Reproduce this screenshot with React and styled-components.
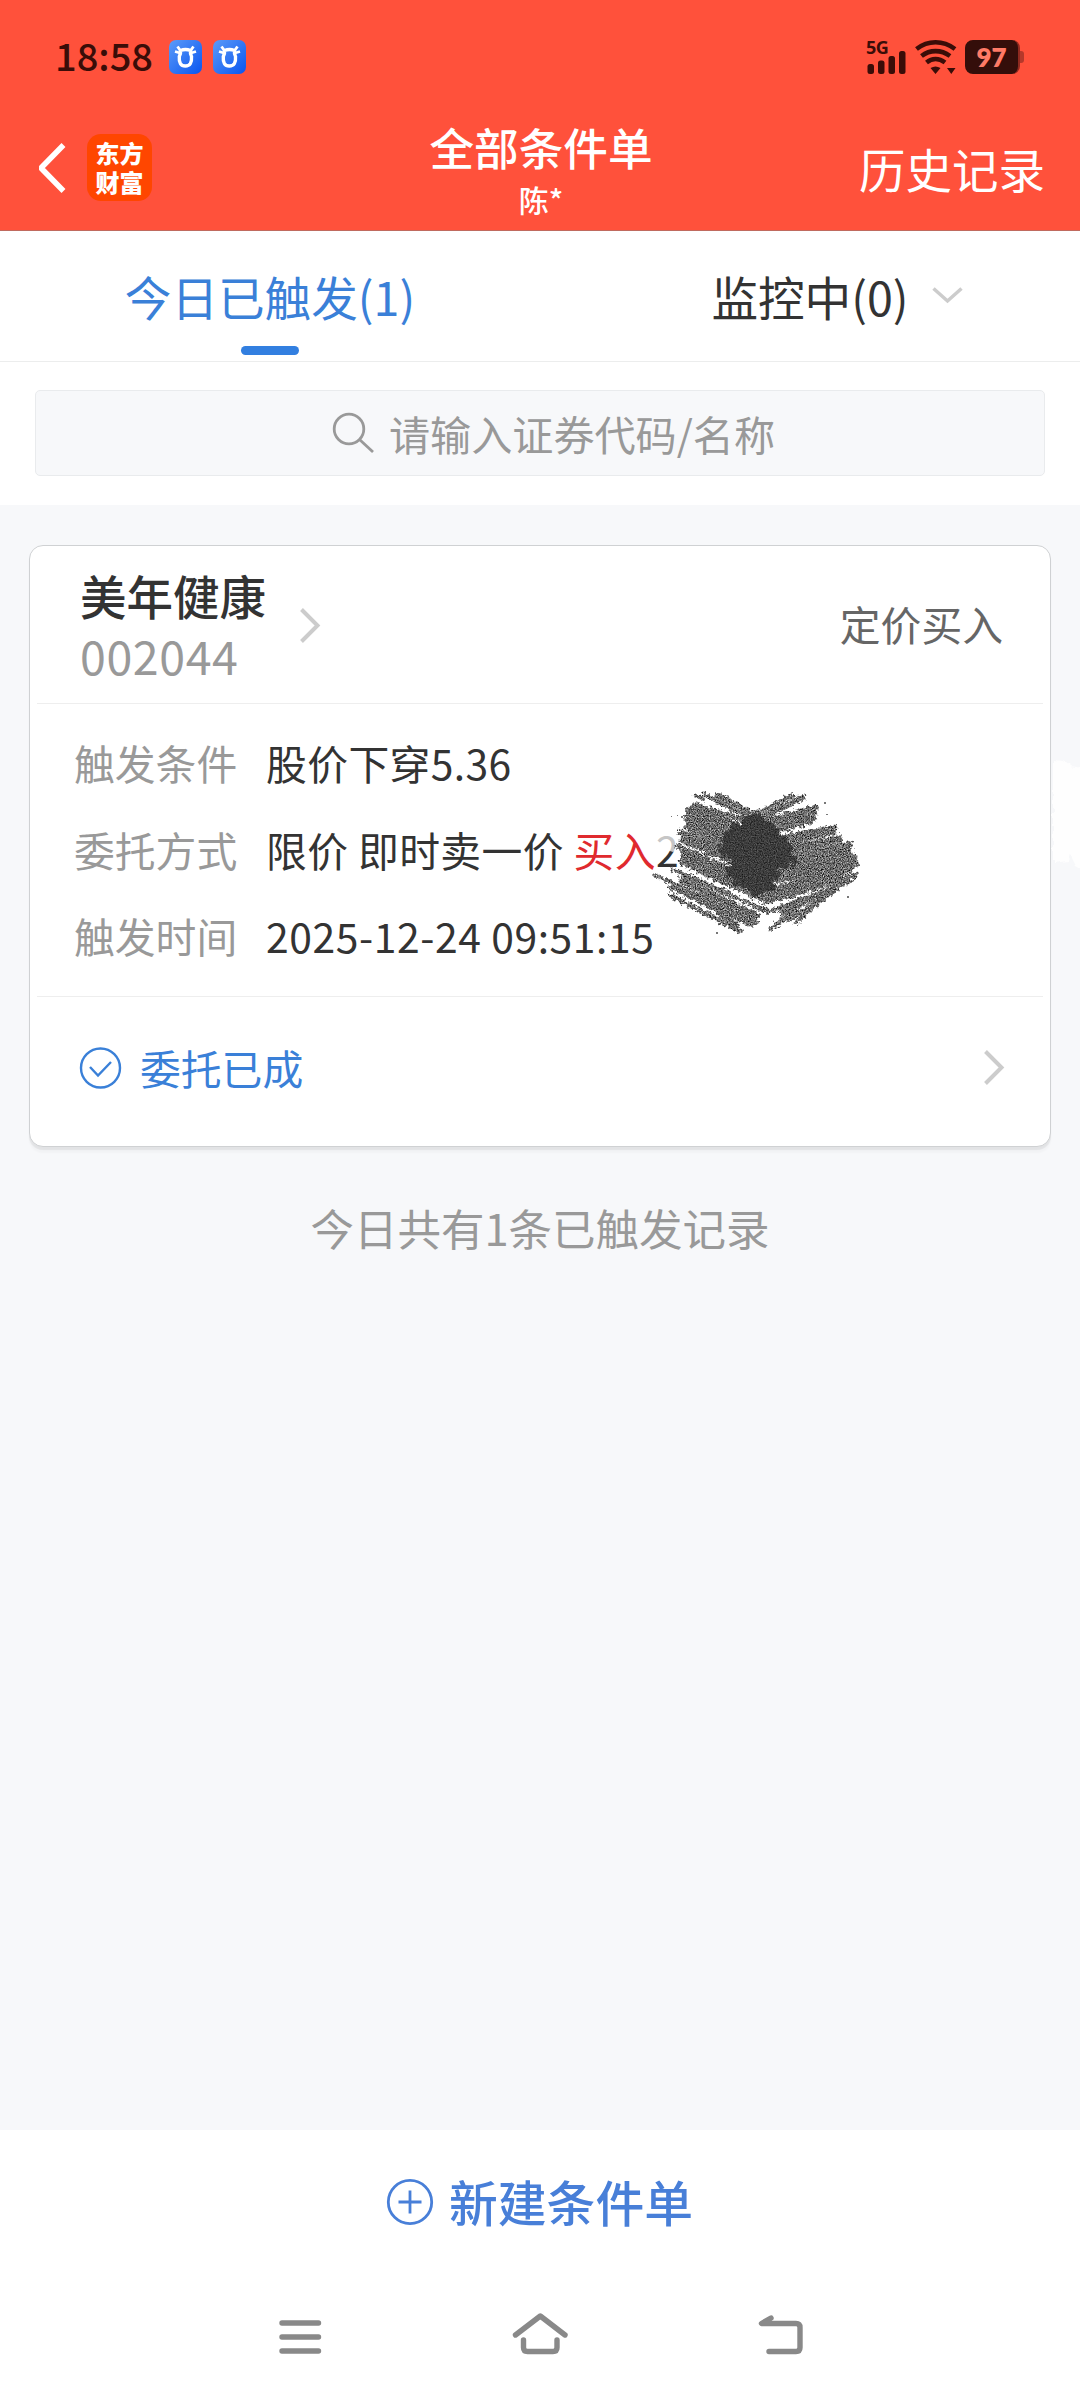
import React from 'react';
import styled, { createGlobalStyle, css } from 'styled-components';

const GlobalStyle = createGlobalStyle`
  * {
    box-sizing: border-box;
  }

  body {
    margin: 0;
    background-color: #f7f8fa;
    font-family: 'Noto Sans CJK SC', 'Noto Sans', sans-serif;
    color: #333;
  }
`;

const Screen = styled.div`
  display: flex;
  flex-direction: column;
  width: 1080px;
  height: 2400px;
  overflow: hidden;
  background-color: #f7f8fa;
`;

const Icon = styled.svg`
  display: block;
  flex: none;
  fill: none;
  stroke: currentColor;
  overflow: visible;
`;

/* status bar */

const StatusBar = styled.div`
  display: flex;
  align-items: center;
  height: 108px;
  padding: 6px 56px 0 55px;
  background-color: #ff513b;
  color: #3a0d08;
`;

const Clock = styled.span`
  font-size: 38px;
  line-height: 40px;
  font-weight: 500;
  margin: -4px 16px 0 0;
`;

const AppBadges = styled.div`
  display: flex;
  gap: 11px;
`;

const StatusIcons = styled.div`
  display: flex;
  align-items: center;
  margin-left: auto;
`;

const Signal = styled.div`
  width: 41px;
  margin-right: 8px;
`;

const SignalLabel = styled.div`
  font-family: 'Open Sans', sans-serif;
  font-size: 18px;
  line-height: 14px;
  height: 11px;
  font-weight: 700;
  letter-spacing: -0.6px;
`;

const Battery = styled.div`
  display: flex;
  align-items: center;
  margin-left: 8px;
`;

const BatteryBody = styled.div`
  width: 55px;
  height: 34px;
  border-radius: 8px;
  border-right: 2px solid #8f2a20;
  background-color: #340e0a;
  color: #ff7a66;
  font-family: Lato, sans-serif;
  font-size: 26px;
  line-height: 34px;
  font-weight: 800;
  text-align: center;
`;

const BatteryTip = styled.div`
  width: 4px;
  height: 12px;
  border-radius: 0 3px 3px 0;
  background-color: #b5382a;
`;

/* title bar */

const TitleBar = styled.header`
  display: grid;
  grid-template-columns: 1fr auto 1fr;
  align-items: center;
  height: 123px;
  padding: 0 35px 3px 37px;
  border-bottom: 1px solid #c06a5e;
  background-color: #ff513b;
  color: #fff;
`;

const TitleLeft = styled.div`
  display: flex;
  align-items: center;
  gap: 21px;
`;

const Brand = styled.div`
  width: 65px;
  height: 67px;
  padding-top: 4px;
  border-radius: 14px;
  background-color: #ff4600;
  font-size: 24px;
  line-height: 29px;
  font-weight: 900;
  text-align: center;
`;

const TitleText = styled.div`
  text-align: center;
`;

const Title = styled.h1`
  margin: 0 0 6px;
  font-size: 44.6px;
  line-height: 56px;
  font-weight: 500;
`;

const Account = styled.div`
  font-size: 30px;
  line-height: 36px;
  font-weight: 500;
`;

const HistoryLink = styled.span`
  justify-self: end;
  font-size: 46.5px;
  line-height: 60px;
`;

/* tabs */

const Tabs = styled.nav`
  display: flex;
  height: 131px;
  border-bottom: 1px solid #eceded;
  background-color: #fff;
`;

const Tab = styled.div`
  position: relative;
  display: flex;
  flex: 1;
  align-items: center;
  justify-content: center;
  font-size: 46.6px;
  line-height: 60px;

  ${props =>
    props.$active &&
    css`
      color: #3a80d8;

      &::after {
        content: '';
        position: absolute;
        bottom: 6px;
        left: 50%;
        width: 58px;
        height: 9px;
        margin-left: -29px;
        border-radius: 5px;
        background-color: #327fe0;
      }
    `}
`;

const TabArrow = styled(Icon)`
  margin: -2px -54px 0 23px;
  color: #ccc;
`;

/* search */

const SearchSection = styled.div`
  padding: 28px 35px 29px;
  background-color: #fff;
`;

const SearchBox = styled.div`
  display: flex;
  align-items: center;
  justify-content: center;
  gap: 15px;
  height: 86px;
  padding-left: 28px;
  border: 1px solid #e9ebed;
  border-radius: 5px;
  background-color: #f7f8fa;
  color: #999;
  font-size: 41.1px;
  line-height: 60px;
`;

/* order card */

const Card = styled.section`
  position: relative;
  margin: 40px 29px 0;
  height: 602px;
  padding: 0 7px;
  border: 1px solid #cfd1d3;
  border-radius: 14px;
  background-color: #fff;
  box-shadow: 0 3px 1px rgba(0, 0, 0, 0.06), 0 6px 2px rgba(0, 0, 0, 0.025);
`;

const CardHeader = styled.div`
  display: flex;
  align-items: center;
  height: 158px;
  padding: 1px 40px 0 43px;
  border-bottom: 1px solid #eee;
`;

const StockName = styled.div`
  font-size: 46.5px;
  line-height: 60px;
  font-weight: 500;
`;

const StockCode = styled.div`
  font-size: 46.5px;
  line-height: 60px;
  letter-spacing: 0.6px;
  color: #999;
`;

const Chevron = styled(Icon)`
  margin-left: ${props => props.$gap || '34px'};
  color: #ccc;
`;

const OrderType = styled.div`
  margin: -3px 0 0 auto;
  font-size: 40.8px;
  line-height: 56px;
  color: #666;
`;

const Details = styled.div`
  height: 293px;
  padding: 16px 37px 0;
  border-bottom: 1px solid #eee;
`;

const DetailRow = styled.div`
  display: flex;
  align-items: center;
  height: 86.5px;
  font-size: 40.8px;
  line-height: 56px;
  white-space: nowrap;
`;

const Label = styled.span`
  width: 192px;
  color: #999;
`;

const Value = styled.span`
  letter-spacing: ${props => props.$spacing || '0.4px'};
`;

const Buy = styled.span`
  color: #e02a2e;
`;

const OrderStatus = styled.div`
  display: flex;
  align-items: center;
  height: 149px;
  padding: 0 39px 8px 43px;
  font-size: 40.8px;
  line-height: 56px;
  color: #3a80d8;
`;

const StatusText = styled.span`
  margin-left: 18px;
`;

/* hand scribble lying over the order quantity */
const Scribble = styled.svg`
  position: absolute;
  top: 194px;
  left: 590px;
  width: 460px;
  height: 240px;
  overflow: visible;
  pointer-events: none;
`;

const Summary = styled.p`
  margin: 51px 0 0;
  font-size: 43.5px;
  line-height: 60px;
  text-align: center;
  color: #999;
`;

/* bottom */

const CreateBar = styled.div`
  display: flex;
  align-items: center;
  justify-content: center;
  gap: 16px;
  height: 142px;
  margin-top: auto;
  background-color: #fff;
  color: #487fd8;
  font-size: 48.8px;
  line-height: 64px;
  font-weight: 500;
`;

const SystemNav = styled.div`
  display: flex;
  justify-content: center;
  height: 128px;
  background-color: #fff;
  color: #898989;
`;

const NavKey = styled.div`
  display: flex;
  align-items: center;
  justify-content: center;
  width: 240px;
`;

const BullIcon = () => (
  <Icon width="33" height="34" viewBox="0 0 33 34">
    <defs>
      <linearGradient id="bull" x1="0" y1="0" x2="1" y2="1">
        <stop offset="0" stopColor="#5b9bf8" />
        <stop offset="1" stopColor="#0a55f0" />
      </linearGradient>
    </defs>
    <rect width="33" height="34" rx="7" fill="url(#bull)" stroke="none" />
    <path
      d="M11.500 10.500Q16.500 8.500 21.500 10.500Q21 14 22.500 16.500Q23.300 26 16.300 26Q9.500 26 10.300 16.500Q12 14 11.500 10.500Z"
      stroke="#fff"
      strokeWidth="3.4"
    />
    <path
      d="M8.500 6.500L11 10M24.500 6.500L22 10M6 11.500L11 13M27 11.500L22 13"
      stroke="#fff"
      strokeWidth="2.8"
    />
  </Icon>
);

const WifiIcon = () => (
  <Icon width="42" height="34" viewBox="0 0 42 34" strokeWidth="4.6">
    <path d="M1.5 9C13 0 28 0 40 9" />
    <path d="M6.5 16C15 9.5 26 9.5 35 16" />
    <path d="M11.5 22.5C17 18 24 18 30 22.5" />
    <path
      d="M15.5 28C19 26 22 26 25.5 28L20.5 34ZM32 28H40.5L36.3 34Z"
      fill="currentColor"
      stroke="none"
    />
  </Icon>
);

// [x1, y1, x2, y2, width]
const leftStrokes = [
  [292, 166, 404, 224, 16],
  [226, 166, 250, 178, 9],
  [250, 162, 420, 250, 14],
  [228, 194, 440, 262, 14],
  [222, 198, 440, 300, 22],
  [208, 216, 440, 318, 26],
  [204, 236, 440, 340, 26],
  [206, 258, 440, 362, 26],
  [184, 276, 440, 380, 20],
  [192, 298, 440, 410, 26],
  [176, 322, 442, 440, 20],
  [194, 346, 444, 462, 26],
  [190, 366, 430, 474, 24],
  [162, 390, 442, 514, 15],
  [190, 422, 408, 528, 24],
  [106, 405, 412, 548, 12],
  [154, 442, 395, 553, 16],
  [152, 466, 362, 574, 14],
  [240, 478, 350, 556, 18],
];

const rightStrokes = [
  [402, 224, 518, 166, 14],
  [406, 240, 548, 174, 19],
  [376, 256, 588, 202, 16],
  [358, 282, 580, 216, 24],
  [346, 300, 576, 238, 26],
  [340, 322, 642, 264, 20],
  [346, 346, 640, 274, 19],
  [340, 360, 656, 298, 25],
  [340, 382, 690, 314, 18],
  [340, 402, 684, 332, 25],
  [350, 424, 704, 352, 23],
  [364, 440, 704, 372, 22],
  [400, 466, 690, 388, 23],
  [424, 478, 660, 402, 22],
  [440, 486, 708, 406, 15],
  [460, 512, 688, 424, 15],
  [486, 520, 640, 444, 18],
  [504, 540, 650, 450, 14],
  [528, 548, 610, 474, 13],
  [452, 568, 530, 506, 13],
];

const Hatch = ({ strokes }) =>
  strokes.map(([x1, y1, x2, y2, width], i) => (
    <line key={i} x1={x1} y1={y1} x2={x2} y2={y2} strokeWidth={width} />
  ));

const ScribbleOverlay = () => (
  <Scribble viewBox="0 0 460 240">
    <defs>
      <filter id="grain" x="-5%" y="-5%" width="110%" height="110%" colorInterpolationFilters="sRGB">
        <feTurbulence type="fractalNoise" baseFrequency="0.3" numOctaves="2" seed="4" result="edge" />
        <feDisplacementMap in="SourceGraphic" in2="edge" scale="8" xChannelSelector="R" yChannelSelector="G" result="shape" />
        <feTurbulence type="fractalNoise" baseFrequency="0.85" numOctaves="2" seed="9" />
        <feColorMatrix values="1.3 0 0 0 -0.23 1.3 0 0 0 -0.23 1.3 0 0 0 -0.23 0 0 0 0 1" />
        <feComposite in2="shape" operator="in" />
      </filter>
      <filter id="grainDark" x="-5%" y="-5%" width="110%" height="110%" colorInterpolationFilters="sRGB">
        <feTurbulence type="fractalNoise" baseFrequency="0.12" numOctaves="3" seed="2" result="edge" />
        <feDisplacementMap in="SourceGraphic" in2="edge" scale="16" xChannelSelector="R" yChannelSelector="G" result="shape" />
        <feTurbulence type="fractalNoise" baseFrequency="0.85" numOctaves="2" seed="5" />
        <feColorMatrix values="0.45 0 0 0 0.01 0.45 0 0 0 0.01 0.45 0 0 0 0.01 0 0 0 0 1" />
        <feComposite in2="shape" operator="in" />
      </filter>
      <filter id="chalk" x="-10%" y="-10%" width="120%" height="120%">
        <feTurbulence type="fractalNoise" baseFrequency="0.15" numOctaves="2" seed="3" result="edge" />
        <feDisplacementMap in="SourceGraphic" in2="edge" scale="6" xChannelSelector="R" yChannelSelector="G" />
      </filter>
    </defs>
    <path d="M37 93H59V108L53 112L37 107Z" fill="#fff" opacity="0.72" />
    <g filter="url(#grain)">
      <g transform="scale(0.3333)" stroke="#666" strokeLinecap="round">
        <Hatch strokes={leftStrokes} />
        <Hatch strokes={rightStrokes} />
      </g>
    </g>
    <g filter="url(#grainDark)">
      <path
        d="M136 73L152 82L166 96L172 111L178 124L160 129L155 140L156 150L136 157L124 147L105 136L112 120L98 112L104 94L118 82Z"
        fill="#333"
      />
    </g>
    <g filter="url(#chalk)">
      <path d="M433 20L444 21L450 26L463 28V130L456 126L450 114L448 121L433 123Z" fill="#fefefe" />
    </g>
    <g fill="#777">
      <rect x="51" y="76" width="1" height="1" />
      <rect x="57" y="75" width="1" height="1" />
      <rect x="61" y="76" width="2" height="2" />
      <rect x="204" y="62" width="2" height="2" />
      <rect x="206" y="74" width="2" height="1" />
      <rect x="219" y="92" width="1" height="1" />
      <rect x="227" y="156" width="2" height="2" />
      <rect x="96" y="192" width="2" height="2" />
    </g>
  </Scribble>
);

const RightArrow = ({ gap }) => (
  <Chevron $gap={gap} width="20" height="35" viewBox="0 0 20 35" strokeWidth="4">
    <path d="M1.5 1.5L17.5 17.5L1.5 33.5" />
  </Chevron>
);

const App = () => {
  return (
    <>
      <GlobalStyle />
      <Screen>
        <StatusBar>
          <Clock>18:58</Clock>
          <AppBadges>
            <BullIcon />
            <BullIcon />
          </AppBadges>
          <StatusIcons>
            <Signal>
              <SignalLabel>5G</SignalLabel>
              <Icon width="40" height="23" viewBox="0 0 40 23">
                <g fill="currentColor" stroke="none">
                  <rect x="1.5" y="13" width="6.5" height="10" rx="2.5" />
                  <rect x="12" y="9.5" width="6.5" height="13.5" rx="2.5" />
                  <rect x="22.5" y="5" width="6.5" height="18" rx="2.5" />
                  <rect x="33" y="0" width="6.5" height="23" rx="2.5" />
                </g>
              </Icon>
            </Signal>
            <WifiIcon />
            <Battery>
              <BatteryBody>97</BatteryBody>
              <BatteryTip />
            </Battery>
          </StatusIcons>
        </StatusBar>

        <TitleBar>
          <TitleLeft>
            <Icon width="29" height="49" viewBox="0 0 29 49" strokeWidth="5.5" strokeLinejoin="bevel">
              <path d="M26.5 2L4 25L26.5 48" />
            </Icon>
            <Brand>
              东方
              <br />
              财富
            </Brand>
          </TitleLeft>
          <TitleText>
            <Title>全部条件单</Title>
            <Account>陈*</Account>
          </TitleText>
          <HistoryLink>历史记录</HistoryLink>
        </TitleBar>

        <Tabs>
          <Tab $active>今日已触发(1)</Tab>
          <Tab>
            监控中(0)
            <TabArrow width="31" height="17" viewBox="0 0 31 17" strokeWidth="3.5">
              <path d="M1.5 1.5L15.5 14L29.5 1.5" />
            </TabArrow>
          </Tab>
        </Tabs>

        <SearchSection>
          <SearchBox>
            <Icon width="41" height="40" viewBox="0 0 41 40" strokeWidth="2.8">
              <circle cx="16" cy="16" r="14.8" />
              <path d="M26.5 26.5L40 39" />
            </Icon>
            请输入证券代码/名称
          </SearchBox>
        </SearchSection>

        <Card>
          <CardHeader>
            <div>
              <StockName>美年健康</StockName>
              <StockCode>002044</StockCode>
            </div>
            <RightArrow />
            <OrderType>定价买入</OrderType>
          </CardHeader>
          <Details>
            <DetailRow>
              <Label>触发条件</Label>
              <Value>股价下穿5.36</Value>
            </DetailRow>
            <DetailRow>
              <Label>委托方式</Label>
              <Value>
                限价 即时卖一价 <Buy>买入</Buy>2
              </Value>
            </DetailRow>
            <DetailRow>
              <Label>触发时间</Label>
              <Value $spacing="0.6px">2025-12-24 09:51:15</Value>
            </DetailRow>
          </Details>
          <OrderStatus>
            <Icon width="42" height="42" viewBox="0 0 42 42" strokeWidth="2.4">
              <circle cx="20.5" cy="21" r="19.5" />
              <path d="M10 20L18 28.5L31 15" />
            </Icon>
            <StatusText>委托已成</StatusText>
            <RightArrow gap="auto" />
          </OrderStatus>
          <ScribbleOverlay />
        </Card>

        <Summary>今日共有1条已触发记录</Summary>

        <CreateBar>
          <Icon width="46" height="46" viewBox="0 0 46 46" strokeWidth="2.8">
            <circle cx="23" cy="24" r="21.7" />
            <path d="M11.5 24H34.5M23 12.5V35.5" />
          </Icon>
          新建条件单
        </CreateBar>

        <SystemNav>
          <NavKey>
            <Icon width="42" height="34" viewBox="0 0 42 34" strokeWidth="5.4" strokeLinecap="round">
              <path d="M3 4H39.5M3 18H39.5M3 32H39.5" />
            </Icon>
          </NavKey>
          <NavKey>
            <Icon
              width="54"
              height="42"
              viewBox="0 0 54 42"
              strokeWidth="5.4"
              strokeLinecap="round"
              strokeLinejoin="round"
            >
              <path d="M2.5 20L27.3 1L52 20" />
              <path d="M10.5 25V32.5Q10.5 36.5 14.5 36.5H40Q44 36.5 44 32.5V25" />
            </Icon>
          </NavKey>
          <NavKey>
            <Icon
              width="46"
              height="42"
              viewBox="0 0 46 42"
              strokeWidth="5.4"
              strokeLinecap="round"
              strokeLinejoin="round"
            >
              <path d="M14 3L4.500 8.500H39Q43 8.500 43 12.500V32.500Q43 36.500 39 36.500H12" />
            </Icon>
          </NavKey>
        </SystemNav>
      </Screen>
    </>
  );
};

export default App;
